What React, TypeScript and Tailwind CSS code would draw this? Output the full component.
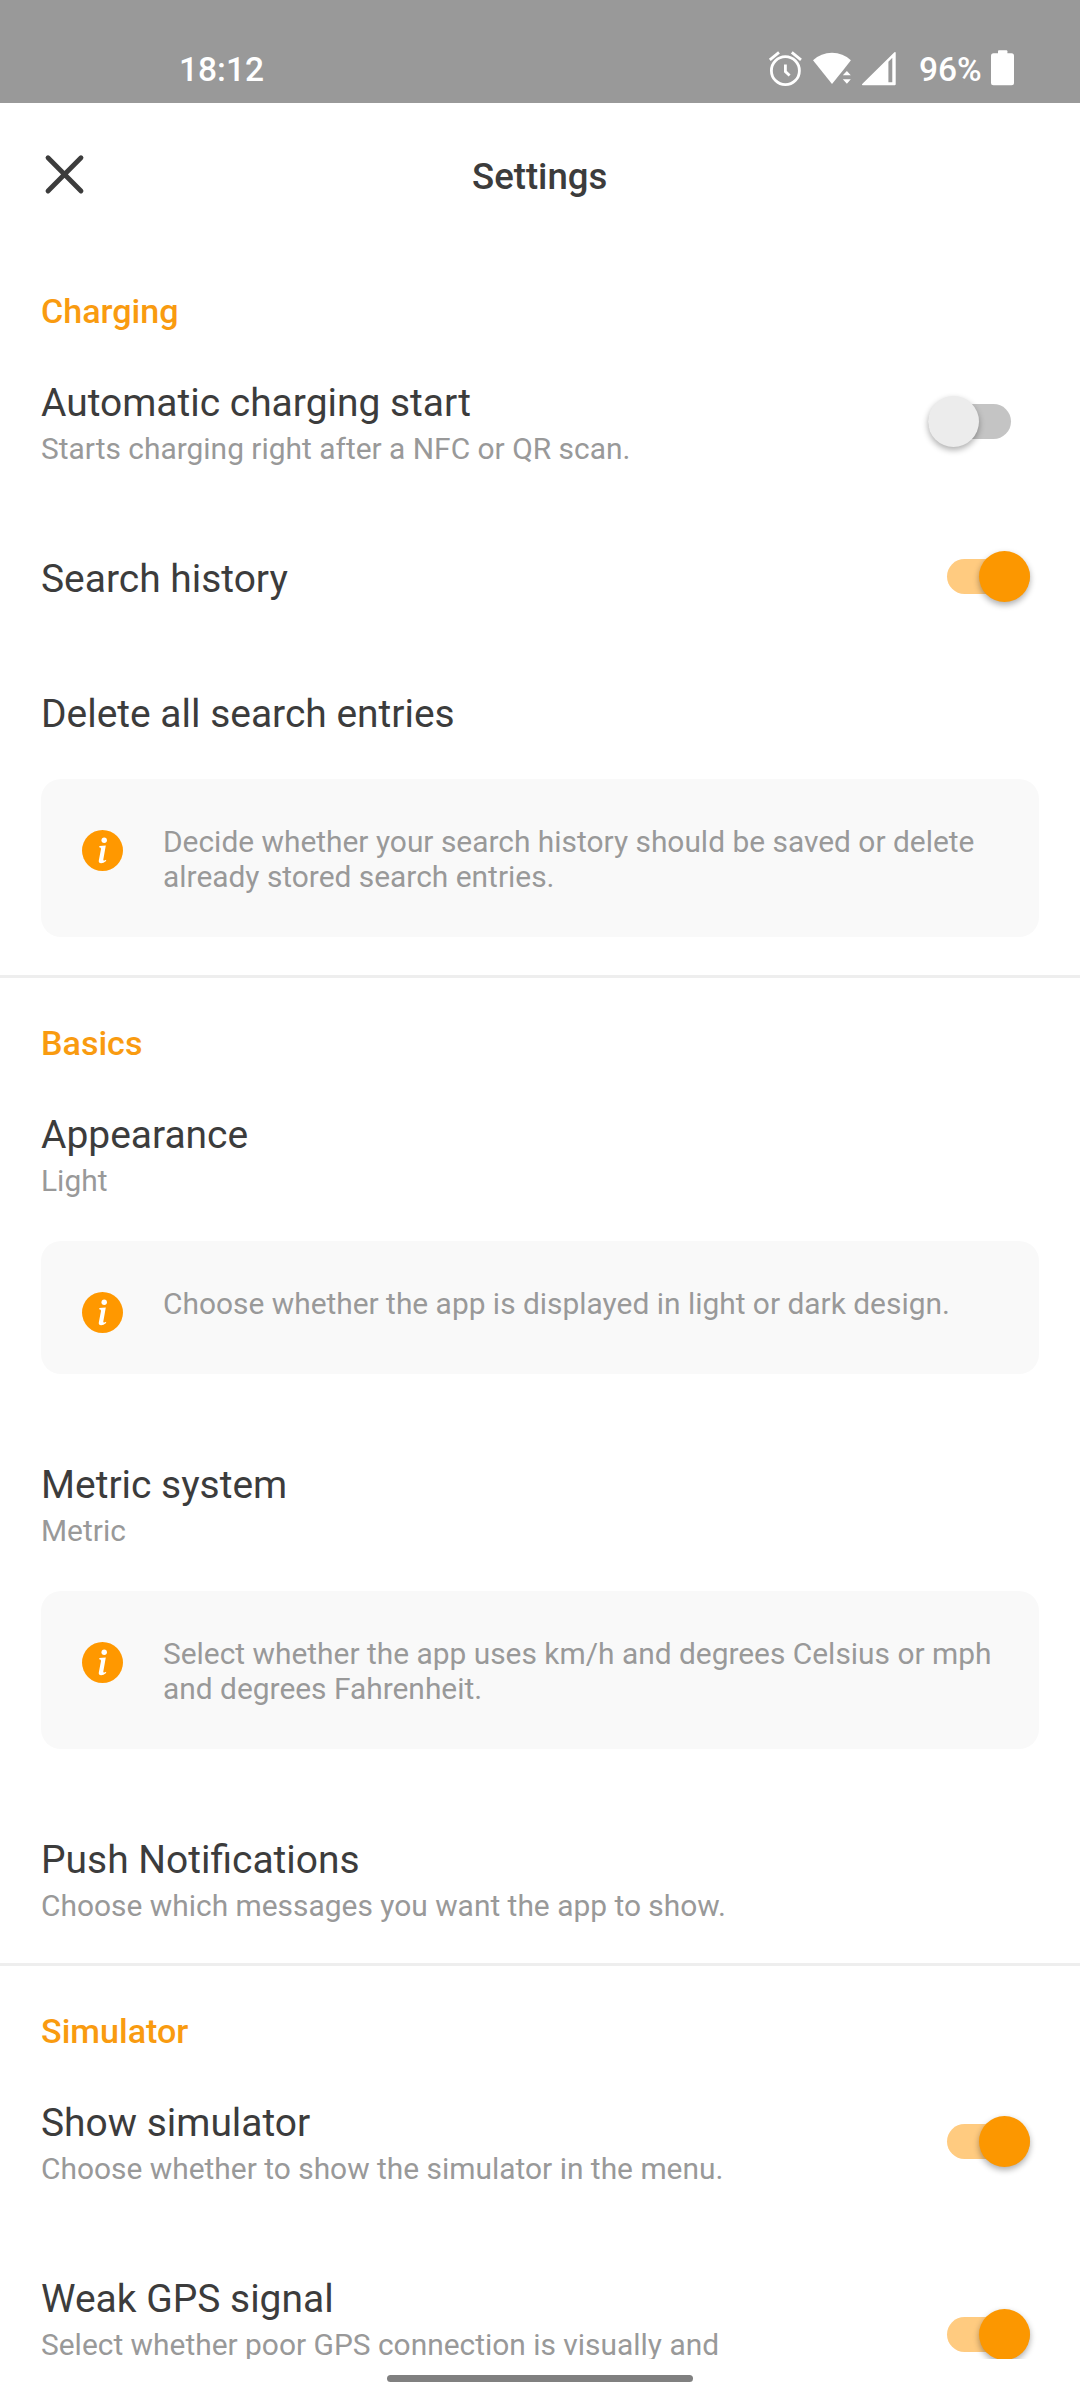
import React from 'react';

function Info({ children, className }: { children: React.ReactNode; className: string }) {
  return (
    <div className={`mx-[41px] flex shrink-0 rounded-[20px] bg-[#f9f9f9] ${className}`}>
      <svg className="ml-[41px] mt-[51px] size-[41px] shrink-0" viewBox="0 0 41 41">
        <circle cx="20.5" cy="20.5" r="20.5" fill="#ff9800" />
        <circle cx="22.2" cy="10.2" r="2.7" fill="#fff" />
        <path d="M17.4 16 23.8 15.4 21.3 29.4q-.2 1.6 1.2 1l1.6-.7v1.2q-2.6 2.3-5 2.3-2.7 0-2.3-2.7l2.2-11.5q.3-1.6-1.8-1.8z" fill="#fff" />
      </svg>
      <p className="ml-[40px] mt-[45px] whitespace-nowrap text-[29.9px] leading-[35px] text-[#999]">{children}</p>
    </div>
  );
}

function Toggle({ on = false, className }: { on?: boolean; className: string }) {
  return on ? (
    <div className={`mr-[50px] flex h-[35px] w-[83px] shrink-0 items-center justify-end rounded-full bg-[#ffcb80] ${className}`}>
      <div className="size-[51.5px] shrink-0 rounded-full bg-[#fc9700] shadow-[0_3px_6px_rgba(0,0,0,0.32)]" />
    </div>
  ) : (
    <div className={`mr-[69px] flex h-[35px] w-[83px] shrink-0 items-center rounded-full bg-[#c4c4c4] ${className}`}>
      <div className="-ml-[0.5px] size-[51.5px] shrink-0 rounded-full bg-[#ececec] shadow-[0_3px_6px_rgba(0,0,0,0.32)]" />
    </div>
  );
}

function Row({ title, sub, className, children }: { title: string; sub?: string; className: string; children?: React.ReactNode }) {
  return (
    <div className={`flex shrink-0 items-start justify-between pl-[41px] ${className}`}>
      <div className="whitespace-nowrap">
        <h3 className="text-[38.95px] leading-[46px] text-[#3c3c3c]">{title}</h3>
        {sub && <p className="mt-[5px] text-[29.92px] leading-[36px] text-[#999]">{sub}</p>}
      </div>
      {children}
    </div>
  );
}

function Heading({ children }: { children: string }) {
  return <h2 className="mb-[49px] h-[40px] shrink-0 pl-[41px] text-[34.1px] font-medium leading-[40px] text-[#f99b10]">{children}</h2>;
}

function Divider({ className }: { className: string }) {
  return <hr className={`mb-[45px] h-[3px] shrink-0 border-0 bg-[#eee] ${className}`} />;
}

function StatusBar() {
  return (
    <header className="flex h-[103px] shrink-0 items-start bg-[#999] pl-[179px] text-[33.5px] font-medium leading-[40px] text-white">
      <span className="mt-[50px] w-[589px]">18:12</span>
      <svg className="mt-[49px] h-[38px] w-[36px]" viewBox="0 0 36 38" fill="none" stroke="#fff" strokeWidth="2.8">
        <circle cx="17.4" cy="21.7" r="14" />
        <path d="M1.8 10.8 11 3.3M23.8 3.3 33 10.8M17.4 15.5V22.6l4.2 4" />
      </svg>
      <svg className="ml-[8px] mt-[49px] h-[38px] w-[40px]" viewBox="0 0 40 38" fill="#fff">
        <path d="M1 11.3Q9 3.8 20 3.8T38.9 11.3L31.5 20.8 20 35z" />
        <path d="M30.8 26.3h8L34.9 22zM30.8 30.3h8l-3.9 4.4z" />
      </svg>
      <svg className="ml-[9px] mt-[49px] h-[38px] w-[36px]" viewBox="0 0 36 38" fill="#fff">
        <path fillRule="evenodd" d="M1.6 36.3Q.4 36 1.2 35L33.4 3.3q1.3-.8 1.3.6V35.3q0 1-1 1zM27.4 12.8V33.3h3.9V8.8z" />
      </svg>
      <span className="ml-[22px] mt-[50px] w-[71px]">96%</span>
      <svg className="mt-[49px] h-[38px] w-[25px]" viewBox="0 0 25 38" fill="#fff">
        <rect x="8" y="1.3" width="9.4" height="6" rx="1" />
        <rect x="1" y="4.3" width="23" height="32" rx="2.5" />
      </svg>
    </header>
  );
}

export default function App() {
  return (
    <main className="flex h-[2400px] w-[1080px] flex-col overflow-hidden bg-white font-['Roboto',sans-serif]">
      <StatusBar />
      <nav className="flex h-[188px] shrink-0 items-start pl-[43px]">
        <svg className="mt-[50px] size-[43px]" viewBox="0 0 43 43">
          <path d="M5 4.8 38 38M38 4.8 5 38" stroke="#3c3c3c" strokeWidth="4.8" strokeLinecap="round" />
        </svg>
        <h1 className="ml-[386px] mt-[52px] text-[36.6px] font-medium leading-[44px] text-[#3c3c3c]">Settings</h1>
      </nav>

      <Heading>Charging</Heading>
      <Row title="Automatic charging start" sub="Starts charging right after a NFC or QR scan." className="h-[176px]">
        <Toggle className="mt-[24px]" />
      </Row>
      <Row title="Search history" className="h-[135px]">
        <Toggle on className="mt-[3px]" />
      </Row>
      <Row title="Delete all search entries" className="h-[88px]" />
      <Info className="h-[158px]">
        Decide whether your search history should be saved or delete
        <br />
        already stored search entries.
      </Info>
      <Divider className="mt-[38px]" />

      <Heading>Basics</Heading>
      <Row title="Appearance" sub="Light" className="h-[129px]" />
      <Info className="h-[133px]">Choose whether the app is displayed in light or dark design.</Info>
      <Row title="Metric system" sub="Metric" className="mt-[88px] h-[129px]" />
      <Info className="h-[158px]">
        Select whether the app uses km/h and degrees Celsius or mph
        <br />
        and degrees Fahrenheit.
      </Info>
      <Row title="Push Notifications" sub="Choose which messages you want the app to show." className="mt-[88px] h-[126px]" />
      <Divider className="" />

      <Heading>Simulator</Heading>
      <Row title="Show simulator" sub="Choose whether to show the simulator in the menu." className="h-[176px]">
        <Toggle on className="mt-[24px]" />
      </Row>
      <Row title="Weak GPS signal" sub="Select whether poor GPS connection is visually and" className="h-[83px] overflow-hidden">
        <Toggle on className="mt-[41px]" />
      </Row>
      <footer className="flex h-[41px] shrink-0 justify-center pt-[16px]">
        <div className="h-[7px] w-[306px] rounded-full bg-[#808080]" />
      </footer>
    </main>
  );
}
